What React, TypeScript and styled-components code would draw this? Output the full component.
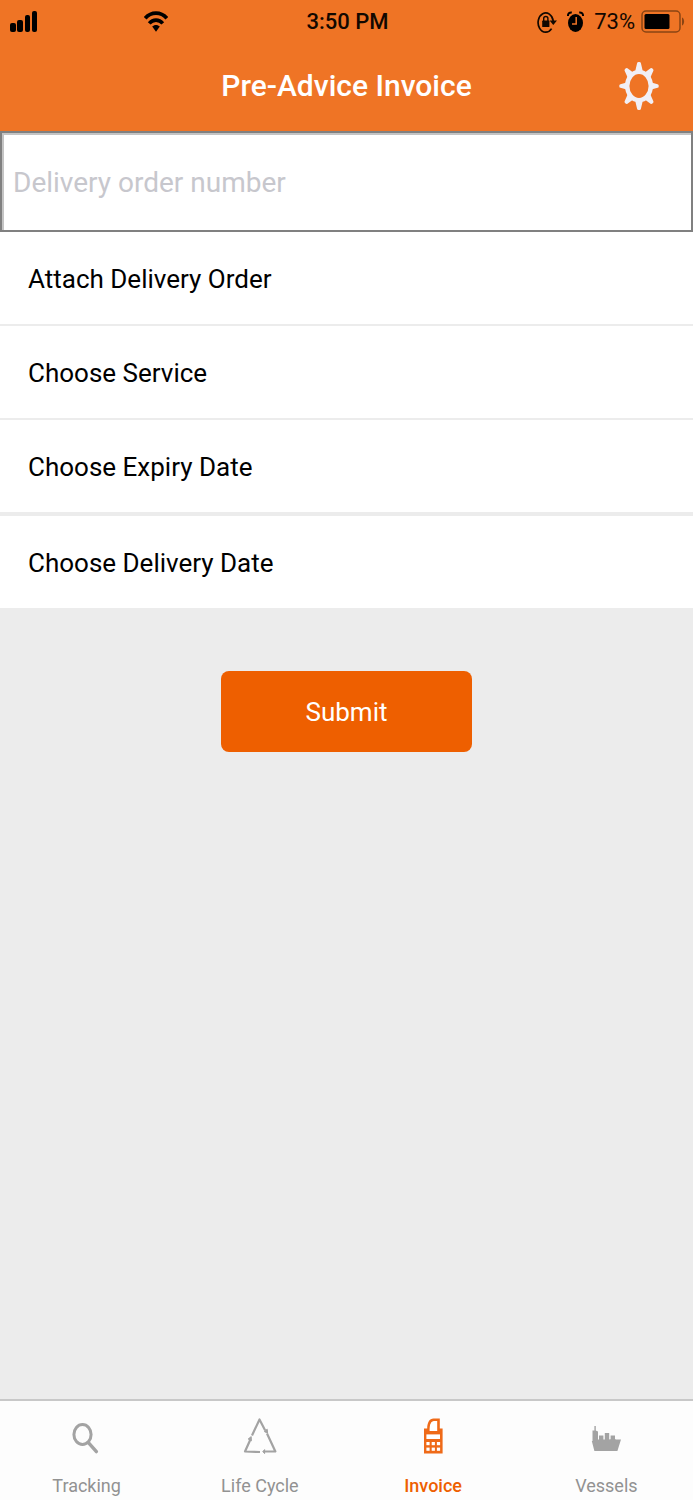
import React from 'react';
import styled, { createGlobalStyle } from 'styled-components';

const GlobalStyle = createGlobalStyle`
  *, *::before, *::after { box-sizing: border-box; }
  body {
    margin: 0;
    background: #ececec;
    font-family: Roboto, sans-serif;
  }
  button, input { font-family: inherit; }
`;

const Screen = styled.div`
  display: flex;
  flex-direction: column;
  min-height: 100vh;
  background: #ececec;
`;

const Header = styled.header`
  background: #ef7425;
`;

const StatusBar = styled.div`
  display: grid;
  grid-template-columns: 1fr auto 1fr;
  align-items: center;
  height: 44px;
  padding: 0 8px 0 10px;
  font-size: 22px;
  line-height: 32px;
  color: #120800;
`;

const StatusGroup = styled.div<{ $end?: boolean; $gap: number }>`
  display: flex;
  align-items: center;
  justify-content: ${(p) => (p.$end ? 'flex-end' : 'flex-start')};
  gap: ${(p) => p.$gap}px;
`;

const Clock = styled.span`
  font-weight: 500;
`;

const TitleBar = styled.div`
  display: grid;
  grid-template-columns: 1fr auto 1fr;
  align-items: center;
  height: 87px;
  padding: 0 34px 3px;
`;

const Title = styled.h1`
  grid-column: 2;
  margin: 0;
  font-size: 30px;
  line-height: 40px;
  font-weight: 500;
  color: #fff;
`;

const IconButton = styled.button`
  justify-self: end;
  display: flex;
  padding: 0;
  border: 0;
  background: none;
  cursor: pointer;
`;

const OrderInput = styled.input`
  width: 100%;
  height: 101px;
  padding: 2px 11px 0;
  border: 2px solid #808080;
  border-radius: 0;
  background: #fff;
  box-shadow: inset 2px 2px 0 #c4c4c4;
  font-size: 28px;
  color: #000;
  outline: none;
  &::placeholder { color: #c7c7cd; opacity: 1; }
`;

const OptionRow = styled.button<{ $divider: number }>`
  display: block;
  width: 100%;
  padding: 27px 28px 25px;
  border: 0;
  border-bottom: ${(p) => p.$divider}px solid #ececec;
  background: #fff;
  font-size: 26px;
  line-height: 40px;
  text-align: left;
  color: #000;
  cursor: pointer;
`;

const Actions = styled.div`
  display: flex;
  justify-content: center;
  flex: 1;
  align-items: flex-start;
  padding: 63px 0;
`;

const SubmitButton = styled.button`
  width: 36%;
  min-width: 251px;
  height: 81px;
  border: 0;
  border-radius: 8px;
  background: #ee5f00;
  font-size: 26px;
  color: #fff;
  cursor: pointer;
`;

const TabBar = styled.nav`
  display: grid;
  grid-template-columns: repeat(4, 1fr);
  height: 101px;
  border-top: 2px solid #c8c8c8;
  background: #fdfdfd;
`;

const Tab = styled.a<{ $active?: boolean }>`
  display: flex;
  flex-direction: column;
  align-items: center;
  gap: 14px;
  padding-top: 13px;
  font-size: 18px;
  line-height: 24px;
  text-decoration: none;
  color: ${(p) => (p.$active ? '#ee5f00' : '#929292')};
  font-weight: ${(p) => (p.$active ? 500 : 400)};
`;

const SignalIcon = () => (
  <svg width="28" height="22" viewBox="0 0 28 22" fill="#000" aria-hidden="true">
    <rect x="0" y="12" width="6" height="9" rx="2" />
    <rect x="7" y="9" width="6" height="12" rx="2" />
    <rect x="15" y="4" width="5" height="17" rx="2" />
    <rect x="22" y="0" width="5" height="21" rx="2" />
  </svg>
);

const WifiIcon = () => (
  <svg width="24" height="22" viewBox="0 0 24 22" fill="none" stroke="#000" strokeWidth="3.6" aria-hidden="true">
    <path d="M1.2 7.2C7.2.4 16.8.4 22.8 7.2" />
    <path d="M5.2 12.4C9 8 15 8 18.8 12.4" />
    <path d="M8.2 15.6C10.2 13.4 13.8 13.4 15.8 15.6L12 20.8Z" fill="#000" stroke="none" />
  </svg>
);

const RotationLockIcon = () => (
  <svg width="20" height="22" viewBox="0 0 20 22" fill="none" stroke="#120800" strokeWidth="1.7" aria-hidden="true">
    <path d="M14.6 17.6A7.6 9.6 0 1 1 16.2 10" />
    <path d="M12.6 9.4H20L16.3 14Z" fill="#120800" stroke="none" />
    <rect x="5.2" y="9.6" width="7.2" height="6.4" rx=".6" fill="#120800" stroke="none" />
    <path d="M6.7 10V7.6C6.7 4.8 10.9 4.8 10.9 7.6V10" strokeWidth="1.4" />
  </svg>
);

const AlarmIcon = () => (
  <svg width="17" height="22" viewBox="0 0 17 22" fill="none" aria-hidden="true">
    <ellipse cx="8.5" cy="12" rx="7.5" ry="9" fill="#000" />
    <path d="M1 5C.8 2.6 2.2 1.2 4.8 1.4M16 5C16.2 2.6 14.8 1.2 12.2 1.4" stroke="#000" strokeWidth="2" />
    <path d="M9.2 6V13H5" stroke="#ef7425" strokeWidth="1.5" />
  </svg>
);

const BatteryIcon = () => (
  <svg width="44" height="24" viewBox="0 0 44 24" aria-hidden="true">
    <rect x="1" y="1" width="38" height="21" rx="4" fill="none" stroke="#8a4413" strokeWidth="1.5" />
    <rect x="3.5" y="4" width="25" height="15" rx="1.5" fill="#000" />
    <path d="M41 7.5C43.8 8.5 43.8 14.5 41 15.5Z" fill="#8a4413" />
  </svg>
);

const GearIcon = () => (
  <svg width="40" height="50" viewBox="0 0 40 50" aria-hidden="true">
    <ellipse cx="20" cy="25" rx="11.8" ry="14.1" fill="none" stroke="#f1eff6" strokeWidth="4.4" />
    <g stroke="#f1eff6" strokeWidth="3" strokeLinejoin="round" fill="#f1eff6">
      <path d="M19.6 2.4H20.4L22 9H18ZM19.6 47.6H20.4L22 41H18Z" />
      <path d="M1.8 24.6V25.4L8 27V23ZM38.2 24.6V25.4L32 27V23Z" />
      <path d="M7 9.2L7.6 8.6L13 12.4L10 16ZM33 9.2L32.4 8.6L27 12.4L30 16Z" />
      <path d="M7 40.8L7.6 41.4L13 37.6L10 34ZM33 40.8L32.4 41.4L27 37.6L30 34Z" />
    </g>
  </svg>
);

const SearchIcon = () => (
  <svg width="36" height="46" viewBox="0 0 36 46" fill="none" stroke="#a3a3a3" aria-hidden="true">
    <ellipse cx="13.5" cy="20.5" rx="8.6" ry="10" strokeWidth="3" />
    <path d="M19.4 28.6L27.4 37.6" strokeWidth="3.4" strokeLinecap="round" />
  </svg>
);

const CycleIcon = () => (
  <svg width="36" height="46" viewBox="0 0 36 46" fill="none" stroke="#a3a3a3" strokeWidth="2.2" strokeLinejoin="round" aria-hidden="true">
    <path d="M10 21.5L17.5 5.5L23.2 16.5" />
    <path d="M25 19.5L33.4 37.5H22" />
    <path d="M18 38L3 37.5L8.4 25.5" />
    <path d="M22.4 17.6L25.6 19.2L25.2 15.2ZM22.6 35.6V39.6L20.8 37.6ZM6.2 25L9.4 26.8L9.2 22.6Z" fill="#a3a3a3" strokeWidth="1" />
  </svg>
);

const InvoiceIcon = () => (
  <svg width="36" height="46" viewBox="0 0 36 46" aria-hidden="true">
    <path d="M9 14.5H12.2C12.2 8.5 14.5 4.5 18.5 4.5H24.8V14.5H27.6V39.5H9Z" fill="#ef6a18" />
    <path d="M14.6 17V15.5C14.6 10.5 16 7 19 7H22.2V17Z" fill="#fff" />
    <g fill="#fff">
      <rect x="11.4" y="20.4" width="13.6" height="4.6" />
      <rect x="11.4" y="28" width="3.2" height="3.2" />
      <rect x="16.7" y="28" width="3.2" height="3.2" />
      <rect x="21.9" y="28" width="3.2" height="3.2" />
      <rect x="11.4" y="33.6" width="3.2" height="3.2" />
      <rect x="16.7" y="33.6" width="3.2" height="3.2" />
      <rect x="21.9" y="33.6" width="3.2" height="3.2" />
    </g>
  </svg>
);

const VesselIcon = () => (
  <svg width="36" height="46" viewBox="0 0 36 46" fill="#a3a3a3" aria-hidden="true">
    <path d="M3.8 27H19L22 25.5H33L29.4 37H6.4Z" />
    <path d="M4.5 16.5H6.4V12H7.8V16.5L10 17.5V27.5H4.5Z" />
    <path d="M11 21.5H15.4V27.5H11ZM16.8 19H21.2V27H16.8ZM22.6 21.5H27V26H22.6ZM9 25.5H28V27.5H9Z" />
  </svg>
);

const options = [
  { label: 'Attach Delivery Order', divider: 2 },
  { label: 'Choose Service', divider: 2 },
  { label: 'Choose Expiry Date', divider: 4 },
  { label: 'Choose Delivery Date', divider: 0 },
];

const tabs = [
  { label: 'Tracking', Icon: SearchIcon },
  { label: 'Life Cycle', Icon: CycleIcon },
  { label: 'Invoice', Icon: InvoiceIcon, active: true },
  { label: 'Vessels', Icon: VesselIcon },
];

export default function App() {
  return (
    <Screen>
      <GlobalStyle />
      <Header>
        <StatusBar>
          <StatusGroup $gap={106}>
            <SignalIcon />
            <WifiIcon />
          </StatusGroup>
          <Clock>3:50 PM</Clock>
          <StatusGroup $end $gap={10}>
            <RotationLockIcon />
            <AlarmIcon />
            <StatusGroup $gap={6}>
              <span>73%</span>
              <BatteryIcon />
            </StatusGroup>
          </StatusGroup>
        </StatusBar>
        <TitleBar>
          <Title>Pre-Advice Invoice</Title>
          <IconButton type="button" aria-label="Settings">
            <GearIcon />
          </IconButton>
        </TitleBar>
      </Header>
      <OrderInput type="text" aria-label="Delivery order number" placeholder="Delivery order number" />
      {options.map(({ label, divider }) => (
        <OptionRow key={label} type="button" $divider={divider}>
          {label}
        </OptionRow>
      ))}
      <Actions>
        <SubmitButton type="button">Submit</SubmitButton>
      </Actions>
      <TabBar>
        {tabs.map(({ label, Icon, active }) => (
          <Tab key={label} href="#" $active={active} aria-current={active ? 'page' : undefined}>
            <Icon />
            {label}
          </Tab>
        ))}
      </TabBar>
    </Screen>
  );
}
